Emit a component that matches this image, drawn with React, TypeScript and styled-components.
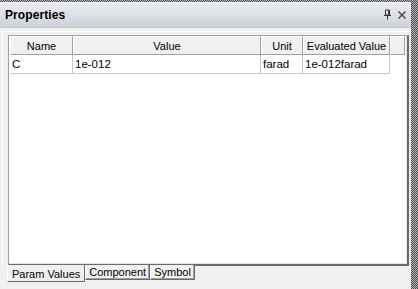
import React from 'react';
import styled, { createGlobalStyle } from 'styled-components';

const Global = createGlobalStyle`
  html, body {
    margin: 0;
    padding: 0;
    background: #f0f0f0;
    overflow: hidden;
  }
`;

const Frame = styled.div`
  width: 418px;
  height: 289px;
  box-sizing: border-box;
  padding: 2px 7px 0 0;
  background-color: #8a8a8a;
  background-image: repeating-conic-gradient(#4a4a4a 0 25%, #b8b8b8 0 50%);
  background-size: 2px 2px;
  display: flex;
`;

const Panel = styled.div`
  flex: 1;
  display: flex;
  flex-direction: column;
  background: #f0f0f0;
  font-family: "Liberation Sans", Arial, sans-serif;
  font-size: 11px;
  color: #000;
`;

const TitleBar = styled.div`
  height: 26px;
  display: flex;
  align-items: center;
  padding: 0 0 0 5px;
  background: linear-gradient(#eceef1, #cdd1d8);
  border-bottom: 1px solid #c3c7ce;
`;

const Title = styled.div`
  flex: 1;
  font-weight: bold;
  font-size: 12px;
  letter-spacing: 0.1px;
`;

const TitleButton = styled.div`
  width: 12px;
  height: 12px;
  margin-right: 3px;
  display: flex;
  align-items: center;
  justify-content: center;
`;

const Page = styled.div`
  margin: 3px 0 0 2px;
  border-top: 1px solid #fff;
  border-left: 1px solid #fff;
  padding: 3px 0 0 5px;
  display: flex;
`;

const Grid = styled.div`
  width: 401px;
  height: 231px;
  box-sizing: border-box;
  border-top: 1px solid #a0a0a0;
  border-left: 1px solid #a0a0a0;
  border-right: 2px solid #6b6b6b;
  border-bottom: 2px solid #6b6b6b;
  box-shadow: inset -1px -1px 0 #e3e3e3;
  background: #fff;
  padding: 0 0 0 1px;
`;

const Row = styled.div`
  display: flex;
  height: 19px;
`;

const HeadCell = styled.div<{ w: number }>`
  width: ${p => p.w}px;
  box-sizing: border-box;
  background: #f0f0f0;
  border-top: 1px solid #fff;
  border-left: 1px solid #fff;
  border-right: 1px solid #a0a0a0;
  border-bottom: 1px solid #a0a0a0;
  display: flex;
  align-items: center;
  justify-content: center;
  padding-top: 1px;
`;

const Cell = styled.div<{ w: number }>`
  width: ${p => p.w}px;
  box-sizing: border-box;
  border-right: 1px solid #c8c8c8;
  border-bottom: 1px solid #c8c8c8;
  display: flex;
  align-items: center;
  padding-left: 2px;
  font-size: 11.5px;
`;

const Tabs = styled.div`
  height: 24px;
  margin-top: -1px;
  display: flex;
  align-items: flex-start;
  padding-left: 7px;
`;

const Tab = styled.div<{ active?: boolean }>`
  box-sizing: border-box;
  height: ${p => (p.active ? 17 : 15)}px;
  padding: ${p => (p.active ? '3px 4px 0 4px' : '1px 3px 0 3px')};
  background: #f0f0f0;
  border-left: 1px solid #fff;
  border-right: 1px solid #696969;
  border-bottom: 1px solid #696969;
  box-shadow: ${p => (p.active ? 'none' : 'inset -1px -1px 0 #a0a0a0')};
  white-space: nowrap;
`;

const cols = [63, 188, 42, 87, 15];

export default function App() {
  return (
    <>
      <Global />
      <Frame>
        <Panel>
          <TitleBar>
            <Title>Properties</Title>
            <TitleButton>
              <svg width="9" height="11" viewBox="0 0 9 11">
                <path d="M2.5 1h4v5h-4z M1 6.5h7 M4.5 7v3.5" fill="none" stroke="#333" strokeWidth="1" />
                <path d="M5.5 1.5v4" stroke="#333" />
              </svg>
            </TitleButton>
            <TitleButton>
              <svg width="10" height="10" viewBox="0 0 10 10">
                <path d="M1.5 1.5l7 7M8.5 1.5l-7 7" stroke="#444" strokeWidth="1.4" />
              </svg>
            </TitleButton>
          </TitleBar>
          <Page>
            <Grid>
              <Row>
                <HeadCell w={cols[0]}>Name</HeadCell>
                <HeadCell w={cols[1]}>Value</HeadCell>
                <HeadCell w={cols[2]}>Unit</HeadCell>
                <HeadCell w={cols[3]}>Evaluated Value</HeadCell>
                <HeadCell w={cols[4]} />
              </Row>
              <Row>
                <Cell w={cols[0]}>C</Cell>
                <Cell w={cols[1]}>1e-012</Cell>
                <Cell w={cols[2]}>farad</Cell>
                <Cell w={cols[3]}>1e-012farad</Cell>
              </Row>
            </Grid>
          </Page>
          <Tabs>
            <Tab active>Param Values</Tab>
            <Tab>Component</Tab>
            <Tab>Symbol</Tab>
          </Tabs>
        </Panel>
      </Frame>
    </>
  );
}
